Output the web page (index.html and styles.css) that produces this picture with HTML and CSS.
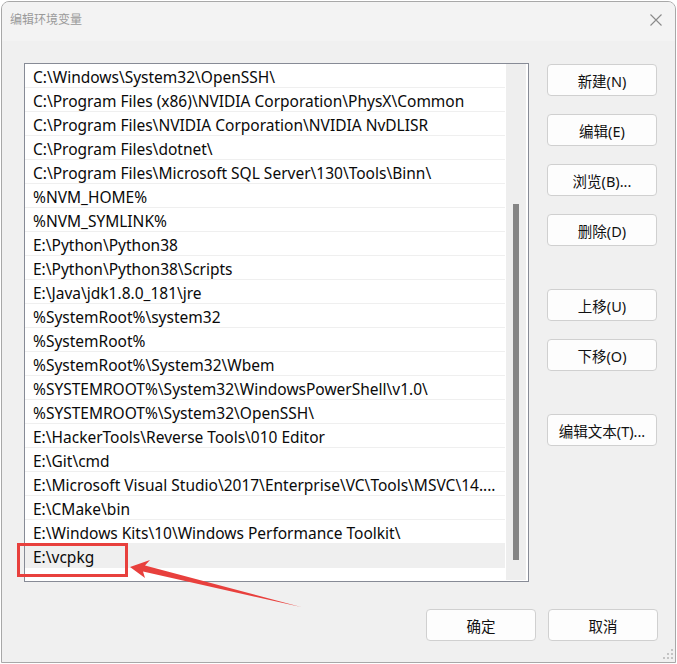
FILE: index.html
```html
<!DOCTYPE html>
<html lang="zh-CN">
<head>
    <meta charset="UTF-8">
    <title>编辑环境变量</title>
    <link rel="stylesheet" href="styles.css">
</head>
<body>
<div class="window">
    <div class="titlebar">
        <span class="title">编辑环境变量</span>
        <span class="close">
            <svg width="12" height="12" viewBox="0 0 12 12"><path d="M0.5 0.5 L11.5 11.5 M11.5 0.5 L0.5 11.5" stroke="#8a8a8a" stroke-width="1.1" fill="none"/></svg>
        </span>
    </div>
    <div class="content">
        <div class="main">
            <div class="listbox">
                <ul class="paths">
                    <li>C:\Windows\System32\OpenSSH\</li>
                    <li>C:\Program Files (x86)\NVIDIA Corporation\PhysX\Common</li>
                    <li>C:\Program Files\NVIDIA Corporation\NVIDIA NvDLISR</li>
                    <li>C:\Program Files\dotnet\</li>
                    <li>C:\Program Files\Microsoft SQL Server\130\Tools\Binn\</li>
                    <li>%NVM_HOME%</li>
                    <li>%NVM_SYMLINK%</li>
                    <li>E:\Python\Python38</li>
                    <li>E:\Python\Python38\Scripts</li>
                    <li>E:\Java\jdk1.8.0_181\jre</li>
                    <li>%SystemRoot%\system32</li>
                    <li>%SystemRoot%</li>
                    <li>%SystemRoot%\System32\Wbem</li>
                    <li>%SYSTEMROOT%\System32\WindowsPowerShell\v1.0\</li>
                    <li>%SYSTEMROOT%\System32\OpenSSH\</li>
                    <li>E:\HackerTools\Reverse Tools\010 Editor</li>
                    <li>E:\Git\cmd</li>
                    <li>E:\Microsoft Visual Studio\2017\Enterprise\VC\Tools\MSVC\14....</li>
                    <li>E:\CMake\bin</li>
                    <li>E:\Windows Kits\10\Windows Performance Toolkit\</li>
                    <li class="selected">E:\vcpkg</li>
                </ul>
                <div class="scrollbar"><div class="thumb"></div></div>
            </div>
            <div class="side">
                <button>新建(N)</button>
                <button>编辑(E)</button>
                <button>浏览(B)...</button>
                <button>删除(D)</button>
                <button class="up">上移(U)</button>
                <button>下移(O)</button>
                <button class="edit-text">编辑文本(T)...</button>
            </div>
        </div>
        <div class="footer">
            <button>确定</button>
            <button>取消</button>
        </div>
    </div>
    <svg class="grip" width="12" height="12" viewBox="0 0 12 12">
        <rect x="9" y="0" width="2" height="2" fill="#c4c4c4"/>
        <rect x="5" y="4" width="2" height="2" fill="#c4c4c4"/>
        <rect x="9" y="4" width="2" height="2" fill="#c4c4c4"/>
        <rect x="1" y="8" width="2" height="2" fill="#c4c4c4"/>
        <rect x="5" y="8" width="2" height="2" fill="#c4c4c4"/>
        <rect x="9" y="8" width="2" height="2" fill="#c4c4c4"/>
    </svg>
</div>

<!-- 标注 -->
<div class="mark"></div>
<svg class="arrow" width="677" height="664" viewBox="0 0 677 664">
    <polygon points="130,567 150,560 145,565.5 301,607 143,571.5 145,578" fill="#e8403d"/>
</svg>
</body>
</html>
```

FILE: styles.css
```css
body {
    margin: 0;
    background: #ffffff;
    font-family: "Segoe UI", "Noto Sans", "Noto Sans CJK SC", sans-serif;
}
.window {
    position: relative;
    margin: 1px 0 0 1px;
    width: 675px;
    height: 662px;
    box-sizing: border-box;
    border: 1px solid #a8a8a8;
    border-radius: 8px 8px 0 0;
    background: #f0f0f0;
    overflow: hidden;
}
.titlebar {
    height: 39px;
    display: flex;
    align-items: center;
    justify-content: space-between;
    padding: 0 13px 0 8px;
    background: #f3f3f3;
    box-sizing: border-box;
}
.title {
    font-family: "Noto Sans CJK SC", sans-serif;
    font-size: 12px;
    color: #9a9a9a;
    margin-top: -6px;
}
.close {
    display: flex;
    margin-top: -4px;
}
.content {
    padding: 22px 17px 0 22px;
}
.main {
    display: flex;
    gap: 18px;
}
.listbox {
    width: 505px;
    height: 519px;
    box-sizing: border-box;
    border: 1px solid #878b96;
    background: #ffffff;
    display: flex;
}
.paths {
    list-style: none;
    margin: 0;
    padding: 0;
    width: 480px;
}
.paths li {
    height: 23px;
    line-height: 26px;
    border-bottom: 1px solid #efefef;
    padding-left: 8px;
    font-size: 15.5px;
    color: #0a0a0a;
    white-space: nowrap;
    overflow: hidden;
}
.paths li.selected {
    background: #efefef;
}
.scrollbar {
    width: 20px;
    margin: 0 1px 1px 1px;
    background: #eeeeee;
}
.thumb {
    width: 6px;
    height: 356px;
    margin: 140px 0 0 7px;
    background: #858585;
}
.side {
    display: flex;
    flex-direction: column;
    gap: 18px;
    padding-top: 1px;
}
button {
    width: 110px;
    height: 32px;
    box-sizing: border-box;
    background: #fdfdfd;
    border: 1px solid #d0d0d0;
    border-radius: 4px;
    font-family: "Segoe UI", "Noto Sans", "Noto Sans CJK SC", sans-serif;
    font-size: 14.5px;
    color: #111111;
    padding: 0;
}
.side .up {
    margin-top: 25px;
}
.side .edit-text {
    margin-top: 25px;
}
.footer {
    display: flex;
    justify-content: flex-end;
    gap: 12px;
    margin-top: 27px;
}
.grip {
    position: absolute;
    right: 1px;
    bottom: 1px;
}
.mark {
    position: absolute;
    left: 17px;
    top: 543px;
    width: 111px;
    height: 34px;
    box-sizing: border-box;
    border: 3px solid #e8403d;
}
.arrow {
    position: absolute;
    left: 0;
    top: 0;
    pointer-events: none;
}
```
